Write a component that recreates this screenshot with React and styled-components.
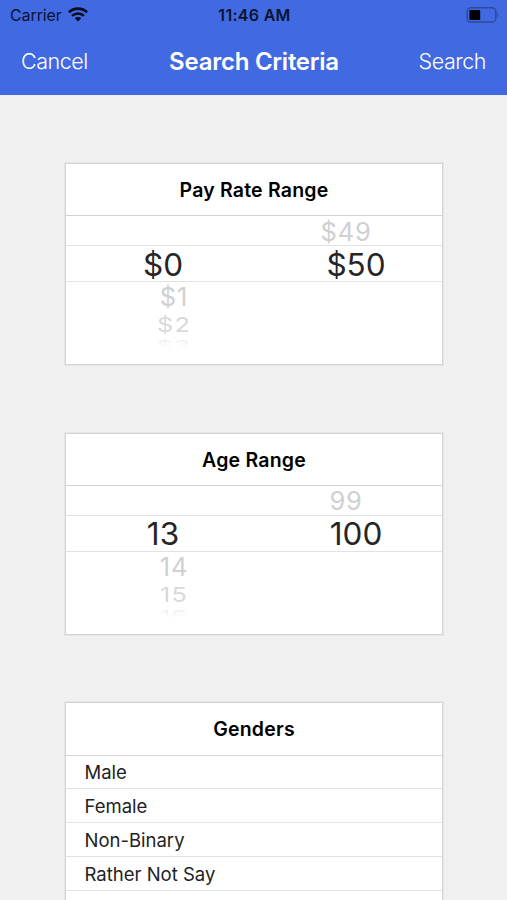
import React from 'react';
import styled, { createGlobalStyle } from 'styled-components';

const payMin = [
  { label: '', kind: 'near' },
  { label: '$0', kind: 'selected' },
  { label: '$1', kind: 'near' },
  { label: '$2', kind: 'far' },
  { label: '$3', kind: 'edge' },
];

const payMax = [
  { label: '$49', kind: 'near' },
  { label: '$50', kind: 'selected' },
];

const ageMin = [
  { label: '', kind: 'near' },
  { label: '13', kind: 'selected' },
  { label: '14', kind: 'near' },
  { label: '15', kind: 'far' },
  { label: '16', kind: 'edge' },
];

const ageMax = [
  { label: '99', kind: 'near' },
  { label: '100', kind: 'selected' },
];

const genders = ["Male", "Female", "Non-Binary", "Rather Not Say", ""];

const WifiIcon = () => (
  <svg width="20" height="15" viewBox="0 0 20 15" fill="none" stroke="#050b1e">
    <path d="M1 5.3 A13 13 0 0 1 19 5.3" strokeWidth="2.7" />
    <path d="M4.1 8.9 A8.5 8.5 0 0 1 15.9 8.9" strokeWidth="2.6" />
    <path d="M10 14.4 L6.8 11.3 A4.6 4.6 0 0 1 13.2 11.3 Z" fill="#050b1e" stroke="none" />
  </svg>
)

const BatteryIcon = () => (
  <svg width="33" height="16" viewBox="0 0 33 16">
    <rect x="1.2" y="0.8" width="28.6" height="14.2" rx="3.6" fill="none" stroke="#2d4a9c" strokeWidth="1.5" />
    <path d="M31.2 5.5 Q33.4 8 31.2 10.5 Z" fill="#2d4a9c" />
    <rect x="3.4" y="2.9" width="10.8" height="10" rx="1" fill="#000" />
  </svg>
)

const Wheel = ({ items, side }) => (
  <WheelColumn $side={side}>
    {items.map((it, i) => (
      <WheelRow key={i} $kind={it.kind} $side={side}>
        <span>{it.label}</span>
      </WheelRow>
    ))}
  </WheelColumn>
)

const RangePicker = ({ title, min, max }) => (
  <Card>
    <CardTitle>{title}</CardTitle>
    <Wheels>
      <Wheel items={min} side="left" />
      <Wheel items={max} side="right" />
    </Wheels>
  </Card>
)

export default function App() {
  return (
    <Screen>
      <GlobalStyle />
      <Header>
        <StatusBar>
          <Carrier>Carrier <WifiIcon /></Carrier>
          <Time>11:46 AM</Time>
          <Battery><BatteryIcon /></Battery>
        </StatusBar>
        <NavBar>
          <NavButton>Cancel</NavButton>
          <NavTitle>Search Criteria</NavTitle>
          <NavButton $align="flex-end">Search</NavButton>
        </NavBar>
      </Header>
      <Content>
        <RangePicker title="Pay Rate Range" min={payMin} max={payMax} />
        <RangePicker title="Age Range" min={ageMin} max={ageMax} />
        <Card>
          <CardTitle>Genders</CardTitle>
          {genders.map((it, i) => <Option key={i}>{it}</Option>)}
        </Card>
      </Content>
    </Screen>
  )
}

const GlobalStyle = createGlobalStyle`
body{
  margin: 0;
  background-color: #f0f0f0;
  font-family: Inter, "Liberation Sans", sans-serif;
}
*{
  box-sizing: border-box;
}
`
const Screen = styled.div`
height: 900px;
overflow: hidden;
background-color: #f0f0f0;
`
const Header = styled.div`
height: 95px;
background-color: #4169e1;
`
const StatusBar = styled.div`
display: grid;
grid-template-columns: 1fr auto 1fr;
align-items: center;
height: 29px;
padding: 0 8px 0 10px;
font-size: 16px;
color: #0a1430;
`
const Carrier = styled.div`
display: flex;
align-items: center;
gap: 6px;
letter-spacing: -0.1px;
`
const Time = styled.div`
font-weight: 600;
letter-spacing: 0.3px;
`
const Battery = styled.div`
display: flex;
justify-content: flex-end;
`
const NavBar = styled.div`
display: grid;
grid-template-columns: 1fr auto 1fr;
align-items: center;
height: 65px;
padding: 0 21px;
color: #fff;
`
const NavButton = styled.div`
display: flex;
justify-content: ${props => props.$align || "flex-start"};
padding-bottom: 1px;
font-size: 21.5px;
font-weight: 300;
letter-spacing: -0.45px;
`
const NavTitle = styled.div`
padding-left: 1px;
font-size: 24px;
font-weight: 600;
letter-spacing: -0.25px;
`
const Content = styled.div`
display: flex;
flex-direction: column;
align-items: center;
gap: 67.4px;
padding: 68px 0 0 1px;
`
const Card = styled.div`
flex-shrink: 0;
width: 378px;
border: 1px solid #d3d3d3;
box-shadow: 0 0 0 1px #e6e6e6;
background-color: #fff;
`
const CardTitle = styled.div`
display: flex;
align-items: center;
justify-content: center;
height: 52.4px;
padding-top: 1px;
border-bottom: 1px solid #d3d3d3;
font-size: 19.5px;
font-weight: 600;
letter-spacing: 0.2px;
color: #000;
`
const Wheels = styled.div`
display: grid;
grid-template-columns: 194px 1fr;
height: 147.8px;
background-image: linear-gradient(#e2e2e2, #e2e2e2), linear-gradient(#e2e2e2, #e2e2e2);
background-repeat: no-repeat;
background-size: 100% 1px;
background-position: 0 29px, 0 65px;
`
const WheelColumn = styled.div`
display: flex;
flex-direction: column;
padding-left: ${props => props.$side === "right" ? "10px" : "0"};
`
const rowStyles = {
  near: { height: 30, size: 25.5, color: "#d0d0d0", scale: 1, spacing: 0.8 },
  selected: { height: 35.5, size: 31.5, color: "#262626", scale: 1, spacing: 0 },
  far: { height: 26, size: 25.5, color: "#d8d8d8", scale: 0.8, spacing: 1 },
  edge: { height: 16, size: 25.5, color: "#f0f0f0", scale: 0.55, spacing: 1 },
}
const WheelRow = styled.div`
display: flex;
align-items: center;
justify-content: center;
height: ${props => rowStyles[props.$kind].height}px;
font-size: ${props => rowStyles[props.$kind].size}px;
letter-spacing: ${props => rowStyles[props.$kind].spacing}px;
color: ${props => rowStyles[props.$kind].color};
padding-left: ${props => props.$kind !== "selected" && props.$side === "left" ? "22px" : "0"};
padding-right: ${props => props.$kind !== "selected" && props.$side === "right" ? "20px" : "0"};
span{
  transform: scaleY(${props => rowStyles[props.$kind].scale});
  ${props => props.$kind === "edge" && "mask-image: linear-gradient(#000 25%, transparent 68%);"}
}
`
const Option = styled.div`
display: flex;
align-items: center;
height: 33.8px;
padding: 1px 0 0 18.5px;
border-bottom: 1px solid #e2e2e2;
font-size: 18.5px;
color: #222;
`
